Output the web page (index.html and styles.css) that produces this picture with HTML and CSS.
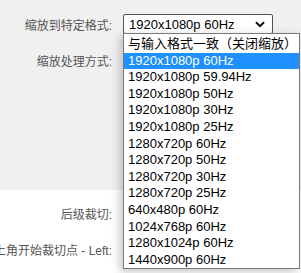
FILE: index.html
```html
<!DOCTYPE html>
<html>
  <head>
    <meta name="viewport" content="width=device-width,initial-scale=1.0">
    <title>输出设置</title>
    <link rel="stylesheet" href="styles.css">
  </head>
  <body>
    <section class="panel grayPanel">
      <div class="row">
        <div class="label">缩放到特定格式:</div>
        <div class="control">
          <div class="select">
            <span>1920x1080p 60Hz</span>
            <svg class="chevron" width="10" height="7" viewBox="0 0 10 7">
              <path d="M1 1.2 L5 5.2 L9 1.2" fill="none" stroke="#111" stroke-width="2"/>
            </svg>
          </div>
          <ul class="dropList">
            <li>与输入格式一致（关闭缩放）</li>
            <li class="active">1920x1080p 60Hz</li>
            <li>1920x1080p 59.94Hz</li>
            <li>1920x1080p 50Hz</li>
            <li>1920x1080p 30Hz</li>
            <li>1920x1080p 25Hz</li>
            <li>1280x720p 60Hz</li>
            <li>1280x720p 50Hz</li>
            <li>1280x720p 30Hz</li>
            <li>1280x720p 25Hz</li>
            <li>640x480p 60Hz</li>
            <li>1024x768p 60Hz</li>
            <li>1280x1024p 60Hz</li>
            <li>1440x900p 60Hz</li>
          </ul>
        </div>
      </div>
      <div class="row">
        <div class="label">缩放处理方式:</div>
        <div class="control"></div>
      </div>
    </section>
    <section class="panel whitePanel">
      <div class="row">
        <div class="label">后级裁切:</div>
        <div class="control"></div>
      </div>
      <div class="row">
        <div class="label">左上角开始裁切点 - Left:</div>
        <div class="control"></div>
      </div>
      <div class="row">
        <div class="label"></div>
        <div class="control"><div class="numInput"></div></div>
      </div>
    </section>
  </body>
</html>
```

FILE: styles.css
```css
body{
  margin: 0;
  padding: 0;
  font-family: "Liberation Sans", "Noto Sans CJK SC", Arial, sans-serif;
  background-color: #fff;
  overflow: hidden;
}
.panel{
  display: flex;
  flex-direction: column;
  gap: 16px;
}
.grayPanel{
  background-color: #f0f0f0;
  height: 190px;
  box-sizing: border-box;
  padding-top: 14px;
}
.whitePanel{
  padding-top: 13px;
}
.row{
  display: flex;
  align-items: center;
  height: 20px;
}
.label{
  width: 112px;
  flex: none;
  display: flex;
  justify-content: flex-end;
  white-space: nowrap;
  font-size: 12px;
  color: #555;
}
.control{
  position: relative;
  margin-left: 11px;
  flex: 1;
  height: 20px;
}
.select{
  width: 150px;
  height: 20px;
  box-sizing: border-box;
  border: 1px solid #555;
  border-radius: 2px;
  background-color: #fff;
  display: flex;
  align-items: center;
  justify-content: space-between;
  padding: 0 4px 0 5px;
  font-size: 13px;
  color: #000;
}
.chevron{
  margin-right: 3px;
}
.dropList{
  position: absolute;
  left: 0;
  top: 19px;
  width: 177px;
  margin: 0;
  padding: 2px 0 0 0;
  box-sizing: border-box;
  list-style: none;
  background-color: #fff;
  border: 1px solid #7a7a7a;
  box-shadow: -3px 3px 9px rgba(0, 0, 0, 0.22);
  z-index: 2;
}
.dropList li{
  height: 16.6px;
  line-height: 16.6px;
  padding-left: 4px;
  font-size: 13px;
  color: #000;
  white-space: nowrap;
}
.dropList li.active{
  background-color: #1e90ff;
  color: #fff;
}
.numInput{
  width: 60px;
  height: 20px;
  box-sizing: border-box;
  border: 1px solid #999;
  margin-top: 2px;
}
```
